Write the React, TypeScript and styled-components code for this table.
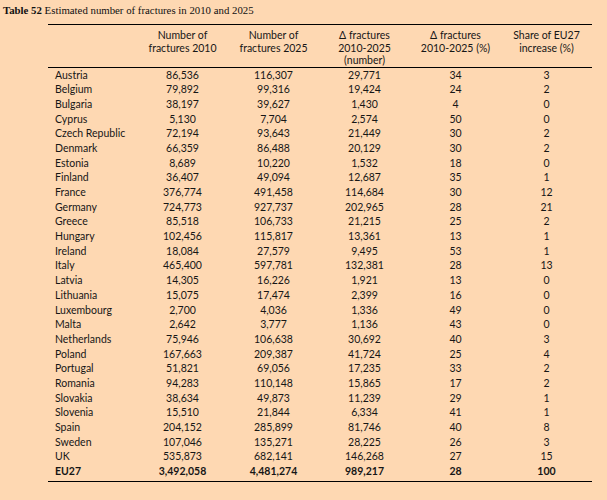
import React from "react";
import styled, { createGlobalStyle } from "styled-components";

const Global = createGlobalStyle`
  html, body { margin: 0; padding: 0; background: #fed8b2; }
  body { width: 607px; height: 500px; overflow: hidden; }
`;

const Page = styled.div`
  width: 607px;
  height: 500px;
  background: #fed8b2;
  padding: 3px 0 0 3px;
  box-sizing: border-box;
  color: #111;
`;

const Caption = styled.div`
  font-family: "Liberation Serif", "Times New Roman", serif;
  font-size: 10.8px;
  line-height: 15px;
  b { font-weight: bold; }
`;

const Table = styled.table`
  margin: 6px 0 0 45px;
  width: 544px;
  border-collapse: collapse;
  table-layout: fixed;
  font-family: Lato, "Open Sans", sans-serif;
  font-size: 10.5px;
  color: #161616;
  border-top: 1px solid #000;
  border-bottom: 1px solid #000;
`;

const HeadRow = styled.tr`
  border-bottom: 1px solid #000;
`;

const Th = styled.th`
  font-weight: normal;
  text-align: center;
  vertical-align: top;
  line-height: 12.5px;
  padding: 4px 0 0;
`;

const Row = styled.tr<{ $bold?: boolean }>`
  font-weight: ${(p) => (p.$bold ? "bold" : "normal")};
`;

const Td = styled.td<{ $left?: boolean; $bottom?: boolean }>`
  text-align: ${(p) => (p.$left ? "left" : "center")};
  padding: 0 0 ${(p) => (p.$bottom ? "2px" : "0")} ${(p) => (p.$left ? "7px" : "0")};
  line-height: 14.68px;
  height: 14.68px;
  white-space: nowrap;
`;

const data: [string, string, string, string, string, string][] = [
  ["Austria", "86,536", "116,307", "29,771", "34", "3"],
  ["Belgium", "79,892", "99,316", "19,424", "24", "2"],
  ["Bulgaria", "38,197", "39,627", "1,430", "4", "0"],
  ["Cyprus", "5,130", "7,704", "2,574", "50", "0"],
  ["Czech Republic", "72,194", "93,643", "21,449", "30", "2"],
  ["Denmark", "66,359", "86,488", "20,129", "30", "2"],
  ["Estonia", "8,689", "10,220", "1,532", "18", "0"],
  ["Finland", "36,407", "49,094", "12,687", "35", "1"],
  ["France", "376,774", "491,458", "114,684", "30", "12"],
  ["Germany", "724,773", "927,737", "202,965", "28", "21"],
  ["Greece", "85,518", "106,733", "21,215", "25", "2"],
  ["Hungary", "102,456", "115,817", "13,361", "13", "1"],
  ["Ireland", "18,084", "27,579", "9,495", "53", "1"],
  ["Italy", "465,400", "597,781", "132,381", "28", "13"],
  ["Latvia", "14,305", "16,226", "1,921", "13", "0"],
  ["Lithuania", "15,075", "17,474", "2,399", "16", "0"],
  ["Luxembourg", "2,700", "4,036", "1,336", "49", "0"],
  ["Malta", "2,642", "3,777", "1,136", "43", "0"],
  ["Netherlands", "75,946", "106,638", "30,692", "40", "3"],
  ["Poland", "167,663", "209,387", "41,724", "25", "4"],
  ["Portugal", "51,821", "69,056", "17,235", "33", "2"],
  ["Romania", "94,283", "110,148", "15,865", "17", "2"],
  ["Slovakia", "38,634", "49,873", "11,239", "29", "1"],
  ["Slovenia", "15,510", "21,844", "6,334", "41", "1"],
  ["Spain", "204,152", "285,899", "81,746", "40", "8"],
  ["Sweden", "107,046", "135,271", "28,225", "26", "3"],
  ["UK", "535,873", "682,141", "146,268", "27", "15"],
];

const total = ["EU27", "3,492,058", "4,481,274", "989,217", "28", "100"];

export default function App() {
  return (
    <Page>
      <Global />
      <Caption>
        <b>Table 52</b> Estimated number of fractures in 2010 and 2025
      </Caption>
      <Table>
        <colgroup>
          <col style={{ width: 89 }} />
          <col style={{ width: 91 }} />
          <col style={{ width: 91 }} />
          <col style={{ width: 91 }} />
          <col style={{ width: 91 }} />
          <col style={{ width: 91 }} />
        </colgroup>
        <thead>
          <HeadRow>
            <Th />
            <Th>Number of<br />fractures 2010</Th>
            <Th>Number of<br />fractures 2025</Th>
            <Th>Δ fractures<br />2010-2025<br />(number)</Th>
            <Th>Δ fractures<br />2010-2025 (%)</Th>
            <Th>Share of EU27<br />increase (%)</Th>
          </HeadRow>
        </thead>
        <tbody>
          {data.map((r) => (
            <Row key={r[0]}>
              {r.map((c, i) => (
                <Td key={i} $left={i === 0}>{c}</Td>
              ))}
            </Row>
          ))}
          <Row $bold>
            {total.map((c, i) => (
              <Td key={i} $left={i === 0} $bottom>{c}</Td>
            ))}
          </Row>
        </tbody>
      </Table>
    </Page>
  );
}
